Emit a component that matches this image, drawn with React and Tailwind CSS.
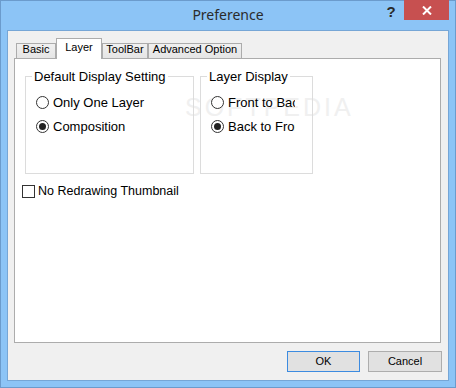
import { useState } from "react";

const Radio = ({ checked, label, clip }) => (
  <div className="flex items-center h-[16px]">
    <span className="ml-[4px] w-[13px] h-[13px] shrink-0 rounded-full border border-[#333] bg-white flex items-center justify-center">
      {checked && <span className="w-[7px] h-[7px] rounded-full bg-[#222]" />}
    </span>
    <span
      className={
        clip
          ? "ml-[4px] w-[67px] overflow-hidden whitespace-nowrap"
          : "ml-[4px] whitespace-nowrap"
      }
    >
      {label}
    </span>
  </div>
);

const GroupBox = ({ title, width, children }) => (
  <fieldset
    className={`${width} h-[105px] border border-[#dcdcdc] pl-[6px] text-[13px] leading-[15px]`}
  >
    <legend className="px-[2px] leading-[15px]">{title}</legend>
    <div className="flex flex-col gap-[8px] mt-[10px]">{children}</div>
  </fieldset>
);

const Tab = ({ label, active, width }) =>
  active ? (
    <div
      className={`${width} h-[21px] -mb-[1px] relative z-10 bg-white border border-b-0 border-[#acacac] text-center pt-[3px] leading-none`}
    >
      {label}
    </div>
  ) : (
    <div
      className={`${width} h-[15px] bg-gradient-to-b from-[#f0f0f0] to-[#e5e5e5] border border-b-0 border-[#acacac] text-center leading-none`}
    >
      {label}
    </div>
  );

const App = () => {
  const [order, setOrder] = useState("back");

  return (
    <div className="w-[456px] h-[388px] relative flex flex-col border border-[#6b9bcc] bg-[#8cc4f6] font-['Liberation_Sans',Arial,sans-serif] text-black">
      {/* Barre de titre */}
      <div className="h-[29px] text-center leading-[27px] text-[14px] text-[#2b2b2b] font-['Noto_Sans',sans-serif]">
        Preference
      </div>
      <div className="absolute -top-[1px] right-[6px] flex items-start">
        <span className="w-[14px] mt-[4px] mr-[6px] text-center text-[15px] font-bold leading-[15px] text-[#2a2a2a]">
          ?
        </span>
        <button className="w-[45px] h-[20px] bg-[#c75050] flex items-center justify-center">
          <svg width="10" height="9" viewBox="0 0 10 9">
            <path d="M1 0.5 L9 8.5 M9 0.5 L1 8.5" stroke="white" strokeWidth="2" />
          </svg>
        </button>
      </div>

      {/* Contenu */}
      <div className="flex-1 mx-[6px] mb-[6px] border border-[#76a6d6] bg-[#f0f0f0] flex flex-col">
        <div className="pt-[7px] pl-[6px]">
          <div className="flex items-end h-[20px] pl-[2px] text-[11px]">
            <Tab label="Basic" width="w-[40px]" />
            <Tab label="Layer" width="w-[46px]" active />
            <Tab label="ToolBar" width="w-[46px]" />
            <Tab label="Advanced Option" width="w-[94px]" />
          </div>
          <div className="w-[427px] h-[285px] border border-[#acacac] bg-white relative isolate">
            <span className="absolute left-[170px] top-[30px] -z-10 text-[25px] tracking-[3px] text-[#f0f0f0] font-['Liberation_Sans',sans-serif] whitespace-nowrap">
              SOFTPEDIA
            </span>
            <div className="flex gap-[6px] ml-[10px] mt-[10px]">
              <GroupBox title="Default Display Setting" width="w-[169px]">
                <Radio label="Only One Layer" />
                <Radio label="Composition" checked />
              </GroupBox>
              <GroupBox title="Layer Display" width="w-[113px]">
                <div onClick={() => setOrder("front")}>
                  <Radio label="Front to Back" clip checked={order === "front"} />
                </div>
                <div onClick={() => setOrder("back")}>
                  <Radio label="Back to Front" clip checked={order === "back"} />
                </div>
              </GroupBox>
            </div>
            <div className="flex items-center ml-[7px] mt-[8px] text-[12.5px]">
              <span className="w-[13px] h-[13px] border border-[#333] bg-white" />
              <span className="ml-[3px]">No Redrawing Thumbnail</span>
            </div>
          </div>
        </div>

        <div className="flex justify-end gap-[8px] pr-[6px] mt-[8px] text-[11px]">
          <button className="w-[73px] h-[21px] border border-[#3c8be0] bg-[#e1e1e1]">
            OK
          </button>
          <button className="w-[74px] h-[21px] border border-[#adadad] bg-[#e1e1e1]">
            Cancel
          </button>
        </div>
      </div>
    </div>
  );
};

export default App;
